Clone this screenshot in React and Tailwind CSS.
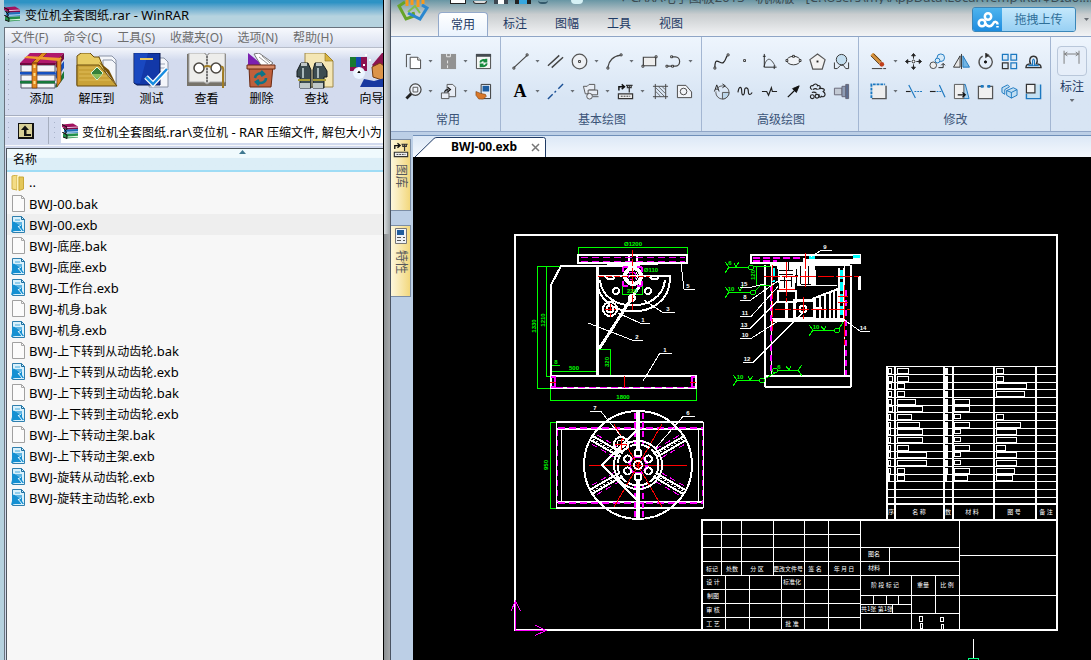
import React, { useState } from 'react'

const SANS = 'font-["Noto_Sans","Noto_Sans_CJK_SC",sans-serif]'

const MENUS = ['文件(F)', '命令(C)', '工具(S)', '收藏夹(O)', '选项(N)', '帮助(H)']

const FILES = [
  'BWJ-00.bak',
  'BWJ-00.exb',
  'BWJ-底座.bak',
  'BWJ-底座.exb',
  'BWJ-工作台.exb',
  'BWJ-机身.bak',
  'BWJ-机身.exb',
  'BWJ-上下转到从动齿轮.bak',
  'BWJ-上下转到从动齿轮.exb',
  'BWJ-上下转到主动齿轮.bak',
  'BWJ-上下转到主动齿轮.exb',
  'BWJ-上下转动主架.bak',
  'BWJ-上下转动主架.exb',
  'BWJ-旋转从动齿轮.exb',
  'BWJ-旋转主动齿轮.exb',
]

// Chinese runs are set one size smaller than the Latin ones
function Mixed({ text }) {
  return text.split(/([\u4e00-\u9fff]+)/).map((part, i) =>
    /[\u4e00-\u9fff]/.test(part) ? (
      <span key={i} className="text-xs">{part}</span>
    ) : (
      <span key={i} className="text-[13px]">{part}</span>
    )
  )
}

/* ---------- archive window icons ---------- */

function BooksIcon() {
  return (
    <svg viewBox="0 0 16 16" className="h-4 w-4 shrink-0">
      <path d="M0 1.500 11 .5l5 3V6L5 6.500 0 4z" fill="#a3125f" />
      <path d="m5 4 11-.5V6L5 6.500z" fill="#7c0c48" />
      <path d="M2 6.500h3L16 6v4L5 10.500 2 9z" fill="#1f6fb8" />
      <path d="M5 8.800 16 8.300v1L5 9.800z" fill="#d8ecff" />
      <path d="M1 11h4l11-.7v4.200l-11 1-4-1.500z" fill="#23904a" />
      <path d="m5 13.400 11-.7v1.200l-11 .7z" fill="#e0f8e0" />
      <path d="M0 1.500 5 4v2.500L1.500 5.500 4 8v2.500L.5 9.500 5 12v3.500L1 14" fill="none" stroke="#111" />
      <path d="m5 4.600 11-.6" stroke="#f0c0dc" />
    </svg>
  )
}

function FileIcon({ exb }) {
  return (
    <svg viewBox="0 0 15 17" className="h-[17px] w-[15px] shrink-0">
      <path d="M1.500.5h9l3 3v13h-12z" fill={exb ? '#d9f1fc' : '#fbfbfb'} stroke={exb ? '#2f7fae' : '#a0a0a0'} />
      <path d="M10.500.5v3h3" fill="none" stroke={exb ? '#1b6f9f' : '#a8a8a8'} />
      {exb && (
        <g>
          <path d="M4 3h5v2H4z" fill="#8fcdec" />
          <path d="M1 5.500 4 6l4 2 3 1v3l2 3H4l-4 1 1-4z" fill="#1590d2" />
          <path d="m4 6 3 0 4 0v3L8 9z" fill="#5db4e2" />
          <path d="m7 10 4 5M10 9l-3 2" stroke="#e6f6ff" />
        </g>
      )}
    </svg>
  )
}

const TOOLS = [
  {
    label: '添加',
    icon: (
      <g>
        <path d="M0 10 10 0h34l-9 10z" fill="#b0186c" />
        <path d="M35 10 44 0v6l-8 9z" fill="#72083f" />
        <path d="m35 20 9-12v7l-8 11z" fill="#1550c0" />
        <path d="m35 33 9-15v7l-8 10z" fill="#16783a" />
        <path d="M1 12h34v7H1zM1 22h34v6H1zM1 30h34v5H1z" fill="#f4f4f8" stroke="#556" />
        <path d="M0 10h35v2H0z" fill="#72083f" />
        <path d="M0 19h35v2.500H0z" fill="#1550c0" />
        <path d="M0 28h35v2.500H0z" fill="#16783a" />
        <path d="M12 10h5v25h-5zM12 10 22 0h5L17 10zM37 7l4-4v25l-4 6z" fill="#e48a20" stroke="#7a3a08" strokeWidth=".7" />
        <path d="m4 5 3-2 35 2-3 3z" fill="#ef9c30" />
        <path d="M14.500 12v20" stroke="#ffe08a" strokeDasharray="3 5" strokeWidth="2" />
      </g>
    ),
  },
  {
    label: '解压到',
    icon: (
      <g>
        <path d="M24 3h13l4 4v25H24z" fill="#f4f6fa" stroke="#8a93a5" />
        <path d="M28 7h9l4 4v20H28z" fill="#f4f6fa" stroke="#8a93a5" />
        <path d="M2 3 6 0h9l4 4h5l12 28H2z" fill="#e7cb62" stroke="#6a4c0c" />
        <path d="M2 12h22l18 21H2z" fill="#c9a238" stroke="#6a4c0c" />
        <path d="M4 15h22M4 19h24M4 23h28M4 27h32" stroke="#e0bd58" />
        <path d="m24 9 10 8 8 16z" fill="#765006" />
        <path d="m22 14 6 6-6 7-6-7z" fill="#35803a" stroke="#dff5da" />
        <path d="M17 21h10l-5 5z" fill="#8abf5c" />
      </g>
    ),
  },
  {
    label: '测试',
    icon: (
      <g>
        <path d="M22 5h12l4 4v25H19z" fill="#f3f5fa" stroke="#8a93a5" />
        <path d="M30 11h5M30 15h5M30 19h5" stroke="#9aa3b4" />
        <path d="M4 0h26v32H7l-3-2z" fill="#1238a8" stroke="#06164e" />
        <path d="M4 0h14l-8 30H4z" fill="#1f58d8" opacity=".5" />
        <path d="M10 6h13" stroke="#e8c860" strokeWidth="2" />
        <path d="m16 24 7 7 14-15" fill="none" stroke="#fff" strokeWidth="5" />
        <path d="m16 24 7 7 14-15" fill="none" stroke="#188ce0" strokeWidth="2.500" />
      </g>
    ),
  },
  {
    label: '查看',
    icon: (
      <g>
        <path d="M2 1v32h39V1l-5-1H24l-2 2-2-2H7z" fill="#77736a" />
        <path d="M4 0h15l3 3v28l-3-2H4zM40 0H25l-3 3v28l3-2h15z" fill="#ededeb" stroke="#aaa" />
        <path d="M22 3v27" stroke="#777" strokeDasharray="2 1" strokeWidth="2" />
        <circle cx="14" cy="15" r="5" fill="#fff" stroke="#4a4640" strokeWidth="1.500" />
        <circle cx="31" cy="15" r="5" fill="#fff" stroke="#4a4640" strokeWidth="1.500" />
        <path d="M19 14q3-2 7 0M36 14q3-1 2 6v15" fill="none" stroke="#a07c24" strokeWidth="2" />
      </g>
    ),
  },
  {
    label: '删除',
    icon: (
      <g>
        <path d="m8 0 16 13H8z" fill="#7c1fb0" />
        <path d="m14 1 5-1 14 10-5 4H22z" fill="#fff" stroke="#777" />
        <path d="m19 4 9 7M22 3l8 7" stroke="#999" />
        <path d="m9 14 24-1-2 21H10z" fill="#c0603c" stroke="#6a2a12" />
        <path d="M7 12h28v4H7z" fill="#d88c68" stroke="#6a2a12" />
        <path d="M15 25a5 5 0 0 1 7-4M26 25a5 5 0 0 1-8 4M21 18l3 3-3 2M19 32l-3-3 3-2" fill="none" stroke="#0e7488" strokeWidth="2.500" />
      </g>
    ),
  },
  {
    label: '查找',
    icon: (
      <g>
        <path d="M10 0h20l8 8v26H10z" fill="#f4e6b4" stroke="#a08a4a" />
        <path d="M30 0v8h8z" fill="#d8b440" stroke="#8c7020" strokeWidth=".6" />
        <path d="M6 10h7l3 7v18H5V24H2v-6zM20 10h7l5 8v6h-3v11H18V17z" fill="#3c4c50" stroke="#141a1c" />
        <path d="M5 30h10v5H5zM18 30h10v5H18zM6 10h6v3H6zM21 10h6v3h-6z" fill="#c0c8c8" />
        <path d="M3 27h12M18 27h13" stroke="#a89c38" strokeWidth="2" />
        <path d="M8 15v10M23 15v10" stroke="#a9b8ba" strokeWidth="2" />
      </g>
    ),
  },
  {
    label: '向导',
    icon: (
      <g>
        <path d="M0 4h17v14H0z" fill="#8c1050" />
        <path d="M0 4h6v10H0z" fill="#1a7a30" />
        <path d="M6 4h5v10H6z" fill="#1648b0" />
        <circle cx="9" cy="20" r="6" fill="#eaf4ff" />
        <path d="M22 12 32 0h12v18l-18-2z" fill="#8c1450" />
        <path d="m22 14 8-4 8 6-3 12-12-4z" fill="#dc9448" stroke="#733c10" />
        <path d="m10 34 4-8 10 2 14-4 4 10z" fill="#1838a0" />
        <path d="M15 2h2M19 7h2M13 12h2M6 20l3-4 3 4" stroke="#fff" strokeWidth="2" />
      </g>
    ),
  },
]

function Grip() {
  return <div className="my-1 w-[3px] shrink-0 self-stretch bg-[radial-gradient(circle,#a9b3ca_1px,transparent_1px)] bg-[length:3px_5px]" />
}

function ArchiveWindow() {
  const [selected, setSelected] = useState('BWJ-00.exb')
  return (
    <section className="flex w-96 shrink-0 flex-col border-r border-black bg-[#b6d2df] pl-1">
      <header className="flex h-[27px] items-center gap-[5px] bg-linear-to-b from-[#2e93c4] from-10% to-[#b6d3df] to-60%">
        <BooksIcon />
        <h1 className="whitespace-nowrap text-[#050505]">
          <Mixed text="变位机全套图纸.rar - WinRAR" />
        </h1>
      </header>

      <div className="flex flex-1 flex-col border-t border-l border-[#68727d] bg-[#d2daee]">
        <nav className="flex h-5 items-center gap-[15px] border-b border-[#b7bdca] bg-linear-to-b from-[#f7f9fd] to-[#d9e0f0] pl-[6px] text-xs text-[#6d6d6d]">
          {MENUS.map(m => (
            <button key={m} className="whitespace-nowrap leading-4">{m}</button>
          ))}
        </nav>

        <div className="flex h-[67px] overflow-hidden bg-linear-to-b from-[#f4f6fb] to-[#d3dbee] to-18% pl-[2px]">
          <Grip />
          <div className="flex pl-1">
            {TOOLS.map(t => (
              <button key={t.label} className="flex w-[55px] shrink-0 flex-col items-center gap-[2px] pt-[5px] text-xs leading-4 text-black">
                <svg viewBox="0 0 44 36" className="h-9 w-11">{t.icon}</svg>
                <span>{t.label}</span>
              </button>
            ))}
          </div>
        </div>

        <div className="flex h-[30px] items-stretch border-t border-[#a6aebf] shadow-[inset_0_1px_0_#f5f7fb] pl-[2px]">
          <Grip />
          <button aria-label="上级目录" className="flex w-[38px] items-center pl-2">
            <svg viewBox="0 0 16 16" className="h-4 w-4">
              <path d="M0 0h16v16H0z" fill="#111" />
              <path d="M1 1h13v13H1z" fill="#d7cf96" />
              <path d="M3 7 7 2.500 11 7H8.500v4H13v2H6V7z" fill="#111" />
            </svg>
          </button>
          <div className="my-px mr-1 w-px bg-[#a6aebf]" />
          <Grip />
          <div className="my-[2px] ml-[5px] flex flex-1 items-center gap-1 overflow-hidden bg-white pl-px">
            <BooksIcon />
            <span className="whitespace-nowrap text-black">
              <Mixed text="变位机全套图纸.rar\变位机 - RAR 压缩文件, 解包大小为" />
            </span>
          </div>
        </div>

        <div className="flex flex-1 flex-col border-t border-[#f5f7fb] pl-px pt-[2px]">
          <table className="block flex-1 border-t border-l border-[#4e565e] bg-[#f7f7f7]">
            <thead className="block">
              <tr className="block">
                <th className="relative flex h-[23px] items-center border-b-2 border-[#9fdcf5] bg-linear-to-b from-[#f0fafd] from-40% to-[#dceef7] to-45% pl-[6px] text-xs font-normal text-black">
                  名称
                  <span className="absolute top-px right-[137px] h-1 w-[7px] bg-[#3f7890] [clip-path:polygon(50%_0,100%_100%,0_100%)]" />
                </th>
              </tr>
            </thead>
            <tbody className="block">
              <tr className="block">
                <td className="flex h-[21px] items-center gap-1 pl-1 text-[13px]">
                  <svg viewBox="0 0 14 16" className="h-4 w-[14px]">
                    <path d="m1 1 5-1v15l-5-1z" fill="#f3dc86" stroke="#d0b044" />
                    <path d="m6 1 3-.5v15L6 15z" fill="#fdf2b8" />
                    <path d="M8 2h4.500v12L8 15.500z" fill="#e4c75a" stroke="#c9a838" />
                  </svg>
                  ..
                </td>
              </tr>
              {FILES.map(name => (
                <tr key={name} className="block" onClick={() => setSelected(name)}>
                  <td className={`flex h-[21px] items-center gap-[2px] pl-1 text-black ${selected === name ? 'bg-[#eeeeee]' : ''}`}>
                    <FileIcon exb={name.endsWith('.exb')} />
                    <span className="whitespace-nowrap pl-px leading-5"><Mixed text={name} /></span>
                  </td>
                </tr>
              ))}
            </tbody>
          </table>
        </div>
      </div>
    </section>
  )
}

/* ---------- ribbon ---------- */

const K = '#444'
const B = '#1c78c0'
const sq = (x, y) => <path key={`${x}-${y}`} d={`M${x - 1} ${y - 1}h2v2h-2z`} fill="#fff" stroke="#222" strokeWidth=".9" />

const GLYPHS = {
  copy: <g stroke={K} fill="#fff"><path d="M1.500 15V1.500H6" fill="none" /><path d="M5.500 4.500h8l3 3v9h-11z" /><path d="M13.500 4.500v3h3" /></g>,
  paste: <g fill="#929292"><path d="M1 1h16v16H1z" /><path d="M7 1v3h4V1M8 8v3M8 13v3" stroke="#eee" fill="none" /></g>,
  refresh: <g><path d="M1.500 1.500h15v15h-15z" fill="#f4f6f4" stroke="#444" /><path d="M1 1h16v3H1z" fill="#454b50" /><path d="M5.500 10a4 3.500 0 0 1 6-2M12.500 11a4 3.500 0 0 1-6 2.500M12 6v3H9M6 15v-3h3" fill="none" stroke="#168a3c" strokeWidth="2" /></g>,
  zoom: <g fill="none"><circle cx="11" cy="7" r="6" fill="#eef3fa" stroke={K} strokeWidth="1.300" /><path d="M8.500 4.500h5v5h-5z" stroke="#555" /><path d="m6.500 11.500-5 5" stroke="#222" strokeWidth="3" /></g>,
  block: <g fill="#e8edf5" stroke="#555"><path d="M7.500 1.500h6l3 3v10h-9z" /><path d="M1.500 10.500h8v6h-8z" /><path d="M5 10c0-2 1-3 4-3M8 4.500l3 2.500-3 2.500" fill="none" stroke="#111" strokeWidth="1.300" /></g>,
  brush: <g><path d="M6.500 1.500h10v15h-10z" fill="#e7eef7" stroke="#333" /><path d="M8 3h7v6H8z" fill="#1d5da0" /><path d="m1 9 5 2 5 1 1 2-3 3H4l-3-4z" fill="#d8782a" stroke="#7c3906" strokeWidth=".6" /></g>,
  line: <g stroke={K} strokeWidth="1.200"><path d="M2 15.500 16 2.500" />{sq(2, 16)}{sq(16, 2)}</g>,
  parallel: <path d="M1 13.500 13 2.500M5 15.500 17 4.500" stroke={K} strokeWidth="1.500" />,
  circle: <g fill="none" stroke="#555"><circle cx="9" cy="9" r="7.700" strokeWidth="1.300" fill="#eef1f5" />{sq(9, 9)}</g>,
  arc: <g fill="none" stroke={K}><path d="M2 15C3 8 8 3 15 2.500" strokeWidth="1.300" />{sq(2, 16)}{sq(16, 2)}</g>,
  rect: <g stroke={K}><path d="M2.500 4.500h13v9h-13z" fill="#eee" strokeWidth="1.300" />{sq(2, 14)}{sq(16, 4)}</g>,
  pline: <g fill="none" stroke={K}><path d="M2 14h6M7 4h4a4.500 5 0 0 1 0 10h-3" strokeWidth="1.300" />{sq(2, 14)}{sq(8, 14)}{sq(7, 4)}</g>,
  center: <path d="m1 17 5-5m2-2 1.500-1.500M12 6l5-5" stroke="#1a4f94" strokeWidth="1.500" />,
  shapes: <g fill="#e8edf5" stroke="#555"><path d="M1.500 3.500h4l2-2h6v6h-6v4h-4z" /><path d="M6.500 7.500h10v5h-10z" /><circle cx="8" cy="14" r="3" /><path d="M11.500 14.500h6" /></g>,
  lib: <g fill="none" stroke="#333"><path d="M2 8V4h5M5 1.500 8 4 5 6.500" stroke="#111" strokeWidth="1.500" /><path d="M9.500 2.500h7M13 2v8M11 2v3h4V2" strokeWidth="1.300" /><path d="M1.500 11.500h15v5h-15z" fill="#eee" strokeWidth="1.300" /><path d="M4 14h10" strokeDasharray="2 1" /></g>,
  hatch: <g fill="none" stroke="#444"><path d="M3.500 1v16M14.500 1v16M1 3.500h16M1 14.500h16" /><path d="m4 9 5 5M4 5l9 9M7 4l7 7M11 4l3 3" strokeWidth=".8" /></g>,
  region: <g fill="#f2f4f8" stroke="#444"><path d="M1.500 2.500h9l6 7v6h-15z" /><circle cx="8" cy="9" r="3.500" /></g>,
  spline: <g fill="none" stroke="#222" strokeWidth="1.300"><path d="M2 15c0-13 6-2 9-5s2-4 4-7" />{sq(2, 16)}{sq(16, 2)}</g>,
  point: <g>{sq(8, 8)}</g>,
  graph: <g fill="none" stroke="#222"><path d="M3.500 1v14h13M2 3.500h3M14 13v4" /><path d="M3 15C6 4 10 4 15 14" strokeWidth=".8" /></g>,
  ellipse: <g stroke="#333"><ellipse cx="9" cy="8" rx="7" ry="4.500" fill="#f1f4f8" />{sq(9, 3.5)}{sq(2, 8)}{sq(16, 8)}</g>,
  polygon: <g stroke="#555"><path d="m9 1 8 6-3 10H4L1 7z" fill="#f2f2f2" strokeWidth="1.300" /><path d="M8 8h2v2H8z" fill="#222" stroke="none" /></g>,
  view: <g stroke="#333" fill="none"><circle cx="9" cy="7" r="5.500" fill="#c3def0" /><path d="M1.500 10v6.500h3L8 13h3l2.500 3.500h3V10" /></g>,
  gearArc: <g stroke="#555" fill="none"><circle cx="10" cy="10" r="7" /><path d="M10 10h7a7 7 0 0 1-7 7z" fill="#bcd6ea" /><path d="m1.500 9 2.500-7 2.500 7M2.500 6.500h3" fill="#dfe9f5" stroke="#222" /><path d="m10 1 3 2-3 2" stroke="#222" /></g>,
  wave: <path d="M1 10c1-7 4-7 4-1 0 5 3 5 3-1 0-4 4-4 4 1s3 3 4 1" fill="none" stroke="#222" strokeWidth="1.200" />,
  breakLine: <path d="M1 9h5l2 4 3-8 1 4h5" fill="none" stroke="#222" strokeWidth="1.200" />,
  arrow: <g stroke="#111"><path d="M3 15 13 5" strokeWidth="1.300" /><path d="m15 3-3 7-4-4z" fill="#111" /></g>,
  chain: <g fill="none" stroke="#222" strokeWidth="1.200"><circle cx="3.500" cy="14.500" r="2" /><circle cx="8.500" cy="14" r="2" /><path d="M3 7c-3-2-1-5 1-4 2-3 5-2 5 0 2-1 4 1 2 3 4-1 7 1 4 3 4 3 1 7-2 5-1 2-3 1-2-2M4 7q3-2 5 0M3 10q3-1 5 1" /></g>,
  shaft: <g stroke="#667"><path d="M1.500 5.500h8v7h-8z" fill="#c3cad4" /><path d="M9.500 3.500h4v11h-4z" fill="#8e9cb4" /><path d="M13.500 1.500h3v15h-3z" fill="#5c6f92" /></g>,
  erase: <g><path d="m2 1 9 9" stroke="#d8923c" strokeWidth="4" /><path d="m1 3 9 9M4 1l8 8" fill="none" stroke="#4c3010" /><circle cx="12.500" cy="12" r="2.500" fill="#c0401c" /><path d="M2 16.500h11M14 16.500h3" stroke="#333" /></g>,
  move: <g stroke="#222" fill="#222"><path d="M9 2v4M9 12v4M2 9h4M12 9h4" /><circle cx="9" cy="9" r="1.500" fill="#fff" /><path d="m9 .5 2 2.500H7zM9 17.500l2-2.500H7zM.5 9 3 7v4zM17.500 9 15 7v4z" /></g>,
  rotCopy: <g fill="none" stroke="#444"><circle cx="12.500" cy="5" r="4" stroke={B} fill="#d7eaf8" /><circle cx="9" cy="8" r="2.500" stroke={B} fill="#d7eaf8" /><circle cx="4.500" cy="13" r="3.500" fill="#eee" /><path d="M10 15.500h5v-4M13 13l2-2 2 2" stroke="#222" /></g>,
  mirror: <g><path d="M7.500 3v12h-7z" fill="#e8e8e8" stroke="#333" /><path d="M10.500 3v12h7z" fill="#74b5e3" stroke={B} /><path d="M9 1v16" stroke="#333" /></g>,
  rotate: <g fill="none" stroke="#555"><path d="M10 2.500a7 7 0 1 1-4 .7" strokeWidth="1.500" /><path d="m9 0 4 2.500L9 5z" fill="#222" /><circle cx="9" cy="9.500" r="1.200" fill="#111" stroke="#111" /></g>,
  array: <g fill="#dceaf6" strokeWidth="1.300"><path d="M1.500 1.500h6v6h-6zM10.500 1.500h6v6h-6zM10.500 10.500h6v6h-6z" stroke={B} /><path d="M1.500 10.500h6v6h-6z" stroke="#333" /></g>,
  offset: <g fill="none"><path d="M1 15.500h16c0-3-2-4-5-4 2-3 1-8-3-8s-5 5-3 8c-3 0-5 1-5 4z" stroke="#333" strokeWidth="1.500" /><path d="M4 13.500h10q-1-1-4-1V8q-1-3-2 0v4.500q-3 0-4 1z" stroke={B} strokeWidth="1.200" /></g>,
  trim: <g fill="none" strokeWidth="1.300"><path d="M2 2h14v14H2z" fill="#eee" /><path d="M1.500 16V1.500H16" stroke={B} strokeDasharray="3 1" strokeWidth="2" /><path d="M2 16.500h15V3" stroke="#555" strokeWidth="1.500" /></g>,
  cut: <g fill="none" strokeWidth="1.200"><path d="M1 9h5" stroke="#222" /><path d="M10 9h8" stroke={B} strokeDasharray="2 1" /><path d="m4 2 7 14" stroke={B} /></g>,
  extend: <g fill="none" strokeWidth="1.200"><path d="M1 9h6" stroke="#222" /><path d="M8 9h6" stroke={B} strokeDasharray="2 1" /><path d="m11 2 6 13" stroke={B} /></g>,
  stretch: <g><path d="M11 1.500h2l4 15h-6z" fill="#a9d1ee" stroke={B} /><path d="M1.500 1.500h10v15h-10z" fill="#f0f0f0" stroke="#555" /><path d="M5 12.500h7M10 10l3 2.500-3 2.500" fill="none" stroke="#111" strokeWidth="1.300" /></g>,
  split: <g><path d="M1.500 3.500h15v13h-15z" fill="#f0f0f0" stroke="#555" strokeWidth="1.300" /><path d="M7 2h4v3H7z" fill="#dfe9f5" /><path d="M4 2h3v3H4zM11 2h3v3h-3z" fill={B} /></g>,
  cube: <g fill="#c0def2" stroke={B}><path d="m1 5 6-3 2 2-5 3v5l-3-2zM6 8l7-3 4 2v6l-6 3-5-3z" /><path d="m6 8 5 2 6-3M11 10v6" fill="none" /></g>,
  scale: <g><path d="M1.500 1.500h15v15h-15z" fill="#c3e0f2" stroke="none" /><path d="M16.500 1.500v15h-15v-5" fill="none" stroke={B} strokeWidth="1.500" /><path d="M1.500 1.500h9v9h-9z" fill="#f2f2f2" stroke="#333" strokeWidth="1.300" /></g>,
}

// a "v" after a name gives the button a drop-down arrow
const GROUPS = [
  {
    title: '常用',
    rows: [['copy', 'v', 'paste', 'v', 'refresh'], ['zoom', 'v', 'block', 'v', 'brush']],
  },
  {
    title: '基本绘图',
    rows: [
      ['line', 'v', 'parallel', 'circle', 'v', 'arc', 'v', 'rect', 'pline', 'v'],
      ['A', 'v', 'center', 'v', 'shapes', 'v', 'lib', 'v', 'hatch', 'region'],
    ],
  },
  {
    title: '高级绘图',
    rows: [
      ['spline', 'point', 'graph', 'ellipse', 'polygon', 'view'],
      ['gearArc', 'wave', 'breakLine', 'arrow', 'chain', 'shaft'],
    ],
  },
  {
    title: '修改',
    rows: [
      ['erase', 'v', 'move', 'rotCopy', 'mirror', 'rotate', 'array', 'offset'],
      ['trim', 'v', 'cut', 'extend', 'stretch', 'split', 'cube', 'scale'],
    ],
  },
]

function Caret() {
  return <span className="block h-[3px] w-[5px] bg-[#6a6f76] [clip-path:polygon(0_0,100%_0,50%_100%)]" />
}

function RibbonCell({ name }) {
  if (name === 'v') {
    return <button aria-label="更多" className="flex h-6 w-[11px] items-center justify-center"><Caret /></button>
  }
  return (
    <button aria-label={name} className="flex h-6 w-6 items-center justify-center">
      {name === 'A' ? (
        <span className="font-['Liberation_Serif',serif] text-lg leading-5 font-bold text-black">A</span>
      ) : (
        <svg viewBox="0 0 18 18" className="h-[17px] w-[17px]">{GLYPHS[name]}</svg>
      )}
    </button>
  )
}

function Ribbon() {
  return (
    <div className="flex h-[96px] shrink-0 overflow-hidden border-y border-[#8fa5c6] bg-linear-to-b from-[#eef5fd] to-[#d8e5f4] to-65%">
      {GROUPS.map(g => (
        <div key={g.title} className="flex shrink-0 flex-col border-r border-[#a3b6d2] pt-3 pr-[5px] pl-[7px] first:pl-[10px]">
          {g.rows.map((row, i) => (
            <div key={i} className="flex h-[30px] shrink-0">
              {row.map((name, j) => <RibbonCell key={j} name={name} />)}
            </div>
          ))}
          <div className="text-center text-xs leading-[22px] text-[#3b5478]">{g.title}</div>
        </div>
      ))}
      <button className="flex shrink-0 flex-col items-center border-r border-[#a3b6d2] px-[6px] pt-[9px] text-xs text-[#1f3a64]">
        <svg viewBox="0 0 30 30" className="h-[30px] w-[30px] rounded border border-[#b9c7da] bg-[#e6eef9]">
          <path d="M6.500 4v14M22.500 4v14M7 7.500h15M10 5.500 7 7.500l3 2M19 5.500l3 2-3 2" fill="none" stroke="#777" />
        </svg>
        <span className="pt-[3px] leading-4">标注</span>
        <span className="pt-1"><Caret /></span>
      </button>
    </div>
  )
}

/* ---------- drawing sheet ---------- */

const G = '#00ff00'
const M = '#ff00ff'
const R = '#ff0000'

// [no., name, qty, material, note] outline widths for each parts-list row
const PARTS = [
  [3, 11, 2, 0, 7], [4, 11, 2, 0, 7], [3, 7, 2, 0, 30], [3, 7, 2, 0, 28], [3, 18, 2, 15, 0],
  [4, 25, 2, 15, 0], [2, 14, 2, 6, 7], [2, 22, 2, 15, 24], [2, 25, 2, 6, 20], [2, 25, 2, 6, 20],
  [2, 11, 2, 15, 9], [2, 29, 2, 6, 20], [2, 29, 2, 6, 20], [2, 7, 2, 15, 18], [1, 7, 1, 13, 16],
]
const PART_X = [888, 897, 945, 954, 996]

const BLOCK_TEXT = [
  [712, 571, '标记'], [732, 571, '处数'], [757, 571, '分 区'], [788, 571, '更改文件号'], [815, 571, '签 名'], [844, 571, '年 月 日'],
  [713, 584, '设 计'], [792, 584, '标准化'], [713, 598, '制图'], [713, 612, '审 核'], [713, 626, '工 艺'], [792, 626, '批 准'],
  [874, 556, '图名'], [874, 570, '材料'], [885, 587, '阶 段 标 记'], [923, 587, '重量'], [947, 587, '比 例'], [877, 611, '共1张 第1张'],
  [891, 514, '序'], [919, 514, '名 称'], [948, 514, '数'], [972, 514, '材 料'], [1014, 514, '图 号'], [1046, 514, '备 注'],
]

const SPOKES = [60, 120, 240, 300]

function FrontView() {
  return (
    <g fill="none">
      <path d="M578.500 256v-8.500h109v8M560 266.500h-22.500v122h13M546.500 266v110.500h5M551 371.500h47M551 365.500h9M599 349.500h11.500v27M550.500 388v12.500h146v-12M622.500 283v11.500h20v-11" stroke={G} />
      <path d="M578 255h109v8H578zM628.500 255v8M636.500 255v8" stroke="#fff" strokeWidth="2" />
      <path d="M607 264.500h51" stroke="#fff" />
      <path d="M581 257.500h104M581 261.500h104" stroke={M} strokeDasharray="7 4" />
      <path d="M640 266h-79l-10 19v91" stroke="#fff" strokeWidth="2" />
      <path d="M597.500 266v110" stroke="#fff" strokeWidth="3" />
      <path d="M551 376h145v12H551z" stroke="#fff" strokeWidth="2" />
      <path d="M556 387.500h136" stroke={M} strokeDasharray="7 4" />
      <path d="M551 377h4v10h-4M695 377h-3v10h3" stroke={M} strokeWidth="2" />
      <path d="M624.500 376v12M550 382.500h6M690 382.500h6" stroke={R} />
      <path d="M597 276h73v4c-2 42-72 42-73 0zM600 280c3 34 62 34 65 0" stroke="#fff" strokeWidth="2" />
      <path d="m642 282-43 67" stroke="#fff" strokeWidth="3" />
      <g stroke="#fff" strokeWidth="2">
        <circle cx="616" cy="291" r="3" /><circle cx="648" cy="291" r="3" /><circle cx="632" cy="298" r="3" />
        <path d="M606 277c1 3 8 3 8 0M650 277c1 3 8 3 8 0" />
        <circle cx="610" cy="309" r="7" /><circle cx="610" cy="309" r="3.500" />
      </g>
      <circle cx="633" cy="276" r="8" stroke="#fff" strokeWidth="4" />
      <path d="M622.500 266.500h19v19h-19z" stroke={M} strokeWidth="2" strokeDasharray="5 9 5 0" />
      <circle cx="632" cy="276" r="4" stroke={M} strokeDasharray="3 2" />
      <circle cx="632" cy="276" r="5.500" stroke="#fff" strokeDasharray="4 2" />
      <path d="M598 276.500h52" stroke={R} strokeDasharray="6 2" />
      <path d="M632.500 250v60M605 309.500h11M610.500 304v13" stroke={R} strokeDasharray="7 2" />
      <path d="m588 323 44 17h11M618 313l22 10h10M644 300l18 12h13M681 264l3 25h11M643 381l17-28h12" stroke="#fff" />
    </g>
  )
}

function TopView() {
  return (
    <g fill="none">
      <path d="M556 422.500h-6v86h6" stroke={G} />
      <path d="M556 422h147M556 429h147M556 502h147M556 508h147" stroke="#fff" strokeWidth="2" />
      <path d="M556.500 422v86M561.500 430v71M698.500 430v71M703.500 422v86" stroke="#fff" />
      <path d="M558 428h145M558 503h145" stroke={M} strokeWidth="2" strokeDasharray="7 4" />
      <path d="M557.500 430v72M702.500 430v72" stroke={M} strokeDasharray="6 4" />
      <circle cx="638" cy="465" r="54" stroke="#fff" strokeWidth="2" />
      <path d="M638 411v40M638 480v40" stroke="#fff" strokeWidth="4" />
      <path d="M634.500 413v34M642.500 413v34M634.500 484v34M642.500 484v34" stroke={M} strokeWidth="2" strokeDasharray="6 3" />
      {SPOKES.map(a => (
        <g key={a} transform={`rotate(${a} 638 465)`}>
          <path d="M636 412v34M640.500 412v34" stroke="#fff" strokeWidth="2" />
          <path d="M638 413v32" stroke="#fff" strokeDasharray="2 2" />
          <path d="M633 415v28M643.500 415v28" stroke={M} strokeDasharray="6 4" />
        </g>
      ))}
      <path d="M589 465.500h98M614 424l48 83M662 424l-48 83" stroke={R} />
      <circle cx="638" cy="465" r="24" stroke="#fff" strokeWidth="2" />
      <circle cx="638" cy="465" r="20.500" stroke="#fff" strokeWidth="2" strokeDasharray="9 2" />
      <circle cx="638" cy="465" r="8.500" stroke={M} strokeWidth="2.500" strokeDasharray="7 2" />
      <circle cx="638" cy="465" r="4" stroke="#fff" strokeWidth="2" />
      <path d="M635 465.500h7M638.500 462v7" stroke={R} />
      {[0, 60, 120, 180, 240, 300].map(a => (
        <circle key={a} cx="638" cy="453" r="3.500" stroke="#fff" strokeWidth="2" transform={`rotate(${a} 638 465)`} />
      ))}
      <path d="m637 430-35 35 35 35" stroke="#fff" strokeWidth="1.500" />
      <circle cx="621" cy="444" r="7" stroke="#fff" strokeWidth="2" />
      <circle cx="621" cy="444" r="4" stroke="#fff" />
      <path d="M615 444.500h12M621.500 439v11" stroke={R} />
      <path d="M590 411.500h11l21 26M695 416.500h-12l-27 31" stroke="#fff" />
    </g>
  )
}

function SideView() {
  return (
    <g fill="none">
      <path d="M751 255h109v8H751z" stroke="#fff" strokeWidth="2" />
      <path d="M803 258h56v6h-56z" fill="#fff" />
      <path d="M805 258.500h48" stroke="#000" />
      <path d="M753 258h50M753 261h24" stroke={M} strokeWidth="2" strokeDasharray="7 3" />
      <path d="M809 256h6v3h-6zM853 255h7v3h-7z" fill="#00ffff" />
      <path d="M765 265v122M851 265v122M770 265h80M765 376h86M765 387h86" stroke="#fff" strokeWidth="2" />
      <path d="M771.500 266v110M844.500 266v110" stroke="#fff" />
      <path d="M771 285v90M846 290v85" stroke={M} strokeWidth="2" strokeDasharray="6 4" />
      <path d="M772 320h73" stroke="#fff" strokeWidth="4" />
      <path d="M777 262h20l-2 28h-16zM797 264h18v22h-18z" fill="#fff" />
      <path d="M788 262v8M779 270h14M779 274h14M780 280h12M784 276v12M791 277v10M800 266v18M808 266v18M798 275h-3M801 284h10" stroke="#000" />
      <path d="M815 285h22M815 270v15" stroke="#fff" />
      <path d="M778 291h18v11h-18z" fill="#000" stroke="#fff" strokeWidth="2" />
      <path d="M786 302v17" stroke="#fff" strokeWidth="3" />
      <path d="M794 300h20v18h-20zM814 308h8" stroke="#fff" strokeWidth="3" />
      <circle cx="803" cy="309" r="3.500" stroke="#fff" strokeWidth="2" />
      <path d="m812 299 26-10v30M820 296v23M825 294v25M830 292v27M834 290v29" stroke="#fff" strokeWidth="2" />
      <path d="M839 268v50M844 268v50" stroke="#fff" strokeWidth="2" />
      <path d="M841.500 270v46M773 268v14" stroke="#00ffff" strokeWidth="3" strokeDasharray="9 3" />
      <path d="M859 276v14" stroke="#fff" strokeWidth="3" />
      <path d="M764 276.500h95M775 309.500h75M779 289.500h17M805.500 253v35M803.500 297v22M786.500 262v40M772.500 265v66M844.500 285v60M838 296.500h10M838 302.500h10" stroke={R} strokeDasharray="16 2" />
      <g stroke={G}>
        <circle cx="751" cy="267.500" r="2.500" /><circle cx="753" cy="292.500" r="2.500" />
        <circle cx="837" cy="330.500" r="2.500" /><circle cx="775" cy="370.500" r="2.500" /><circle cx="762" cy="380.500" r="2.500" />
        <path d="M749 267.500h-20M725 262l4 5-4 6M734 263l2 4 3-5M753 266.500h18M756.500 267v18" />
        <path d="M751 292.500h-22M725 287l4 5-4 6M738 287l2 4 3-5M755 291l6-6h10" />
        <path d="M835 330.500h-22M809 325l4 5-4 6M821 326l3 4 2-4M839 329l4-7" />
        <path d="M777 370.500h21M802 365l-4 5 4 6M786 366l3 4 2-4M775 373l-9 5" />
        <path d="M760 380.500h-23M733 375l4 5-4 6M748 376l2 4 3-4" />
      </g>
      <path d="M740 287.500h10l16-4M740 300.500h10l30-21M740 316.500h11l27-30M740 328.500h10l28-28M740 338.500h11l28-18M743 362.500h10l50-50M832 250.500h-11l-10 6M843 319l17 12h10" stroke="#fff" />
    </g>
  )
}

function TitleBlock() {
  return (
    <g fill="none" stroke="#fff">
      <path d="M702 630V520h355M887 520V366" strokeWidth="2" />
      <path d="M887 366.500h170M887 374.500h170M887 382.500h170M887 389.500h170M887 397.500h170M887 405.500h170M887 412.500h170M887 420.500h170M887 428.500h170M887 435.500h170M887 443.500h170M887 451.500h170M887 458.500h170M887 466.500h170M887 474.500h170M887 481.500h170M887 489.500h170M887 497.500h170" />
      <path d="M887 504h170" strokeWidth="2" />
      <path d="M895 366v154M944 366v154M953 366v154M994 366v154M1036 366v154" strokeWidth="2" />
      {PARTS.map((row, r) =>
        row.map((w, c) => w > 0 && (
          <rect
            key={`${r}-${c}`}
            x={PART_X[c] + 0.5}
            y={368.5 + Math.round(r * 7.67)}
            width={w}
            height={c === 3 && w === 6 ? 4 : 5}
            fill={c === 2 ? '#fff' : 'none'}
          />
        ))
      )}
      <path d="M702 534.500h158M702 547.500h257M702 561.500h257M702 575.500h257M702 589.500h158M702 603.500h158M702 617.500h158" />
      <path d="M721.500 520v55M741.500 520v55M773.500 520v55M804.500 520v110M828.500 520v110M860.500 520v110M725.500 575v55M749.500 575v55M781.500 575v55" />
      <path d="M889.500 547v28M911.500 575v55M935.500 575v38M959.500 520v110M860 595.500h99M860 604.500h51M860 613.500h99M873.500 595v9M886.500 595v9M898.500 595v9M892.500 604v9M959 555.500h98M959 595.500h98" />
      <path d="M919.500 616.500v5h3v-5zM920.500 623.500h2v5h-2zM940.500 617.500v4h3v-4zM941.500 624.500h2v5h-2z" />
    </g>
  )
}

function Label({ x, y, turn, color, children }) {
  return (
    <text x={x} y={y} fill={color || '#fff'} textAnchor="middle" transform={turn ? `rotate(-90 ${x} ${y})` : undefined}>
      {children}
    </text>
  )
}

function Drawing() {
  return (
    <svg viewBox="413 157 678 503" className="h-[503px] w-[678px] shrink-0" shapeRendering="crispEdges" aria-label="BWJ-00">
      <path d="M515 235h542v395H515z" fill="none" stroke="#fff" strokeWidth="2" />
      <FrontView />
      <TopView />
      <SideView />
      <TitleBlock />

      <g className='font-["Liberation_Sans",sans-serif] text-[6px] font-bold'>
        <Label x={633} y={246} color={G}>Ø1200</Label>
        <Label x={623} y={399} color={G}>1800</Label>
        <Label x={574} y={370} color={G}>500</Label>
        <Label x={556} y={364} color={G}>8</Label>
        <Label x={632} y={293} color={G}>220</Label>
        <Label x={651} y={272} color={G}>Ø110</Label>
        <Label x={536} y={326} turn color={G}>1330</Label>
        <Label x={545} y={320} turn color={G}>1210</Label>
        <Label x={609} y={362} turn color={G}>320</Label>
        <Label x={548} y={465} turn color={G}>950</Label>
        <Label x={755} y={275} turn color={G}>120</Label>
        <Label x={730} y={265} color={G}>6</Label>
        <Label x={731} y={291} color={G}>10</Label>
        <Label x={816} y={329} color={G}>10</Label>
        <Label x={740} y={379} color={G}>10</Label>
        <Label x={779} y={369} color={G}>6</Label>
        <Label x={643} y={322}>1</Label>
        <Label x={637} y={339}>2</Label>
        <Label x={668} y={311}>3</Label>
        <Label x={688} y={288}>5</Label>
        <Label x={665} y={352}>1</Label>
        <Label x={595} y={410}>7</Label>
        <Label x={688} y={415}>6</Label>
        <Label x={825} y={249}>9</Label>
        <Label x={744} y={286}>15</Label>
        <Label x={745} y={299}>8</Label>
        <Label x={745} y={315}>11</Label>
        <Label x={744} y={327}>13</Label>
        <Label x={745} y={337}>10</Label>
        <Label x={747} y={361}>12</Label>
        <Label x={863} y={330}>14</Label>
      </g>
      <g className='font-["Noto_Sans_CJK_SC",sans-serif] text-[6px]'>
        {BLOCK_TEXT.map(([x, y, t]) => <Label key={t} x={x} y={y}>{t}</Label>)}
      </g>

      <path d="M515.500 630v-29M511 611l4.500-10 5 10M515 630.500h31M535 625l11 5.500-11 5" fill="none" stroke={M} />
      <path d="M973.500 639v19" stroke="#fff" />
      <path d="M968 658.500h10v3h-10z" fill="none" stroke="#00ff80" />
    </svg>
  )
}

/* ---------- CAD window ---------- */

function CadHeader() {
  const tabs = ['标注', '图幅', '工具', '视图']
  return (
    <header className="relative flex h-9 shrink-0 overflow-hidden bg-linear-to-b from-[#6896a4] via-[#c9cdcf] via-40% to-[#f3f4f6] pl-[5px]">
      <svg viewBox="0 0 34 24" className="h-6 w-[34px] shrink-0">
        <path d="m9 2-6 4 7 13 8-3-1-4" fill="none" stroke="#66a428" strokeWidth="3" />
        <path d="m12 13 12 6 7-11-5-3" fill="none" stroke="#2b87cf" strokeWidth="3" />
        <path d="m12 12 7-6 5 7" fill="none" stroke="#7fbf4c" strokeWidth="2" />
        <path d="M11 0v6M16 0v5M22 0v7M27 0v4" fill="none" stroke="#f79a1c" strokeWidth="3" />
      </svg>
      <div className="flex min-w-0 flex-1 flex-col justify-between pl-2">
        <div className="flex h-1 items-end overflow-hidden pl-3 text-[#30373c]">
          <div className="flex w-[170px] shrink-0 items-end gap-[7px]">
            <i className="h-1 w-4 border border-t-0 border-[#222] bg-white" />
            <i className="h-[3px] w-[14px] rounded-b border border-t-0 border-[#333] bg-[#ddd]" />
            <i className="h-1 w-[14px] border-x-4 border-[#3d4650] bg-white" />
            <i className="h-1 w-4 border-x-4 border-[#222] bg-[#36a7e0]" />
            <i className="h-1 w-[10px] rounded-b border-b-2 border-[#33596b]" />
            <i className="ml-4 h-1 w-3 rounded-b bg-[#d6f1f5]" />
          </div>
          <span className="whitespace-nowrap text-[13px] leading-[14px] opacity-80">
            ▾ CAXA电子图板2013 - 机械版 - [C:\Users\my\AppData\Local\Temp\Rar$DIa0....
          </span>
        </div>
        <nav className="flex h-6 text-xs leading-6 text-[#1f3a64]">
          <button className="mr-px w-[50px] rounded-t border border-b-0 border-[#93a9cb] bg-linear-to-b from-white to-[#eaf3fd]">常用</button>
          {tabs.map(t => <button key={t} className="w-[52px]">{t}</button>)}
        </nav>
      </div>
      <div className="absolute top-[7px] right-0 flex items-center">
        <button className="flex h-[25px] overflow-hidden rounded-[3px] border border-[#3a86b8] text-xs text-[#2f6f98]">
          <span className="flex w-[29px] items-center justify-center bg-linear-to-b from-[#4db4ee] to-[#1d8cdf]">
            <svg viewBox="0 0 22 16" className="h-4 w-[22px]" fill="none" stroke="#fff" strokeWidth="2.500">
              <circle cx="11" cy="4.500" r="3.200" />
              <circle cx="5" cy="11" r="3.300" />
              <path d="M8.500 11c0 3 5 4.500 7 1.500 2-4 5-3 5 0M20.500 14v1.500" />
            </svg>
          </span>
          <span className="w-[73px] bg-linear-to-b from-[#c4e8fb] to-[#98d0f4] leading-[23px]">拖拽上传</span>
        </button>
        <span className="flex w-[15px] justify-end pr-[2px]"><Caret /></span>
      </div>
    </header>
  )
}

function DockTab({ icon, label }) {
  return (
    <button className="flex h-[72px] w-5 flex-col items-center gap-[6px] border border-l-0 border-[#7c8ea6] bg-linear-to-r from-[#fdf7dc] to-[#f3d87c] pt-[2px] text-xs leading-4 text-[#55585c]">
      {icon}
      <span className="[writing-mode:vertical-rl] [text-orientation:sideways]">{label}</span>
    </button>
  )
}

function CadWindow() {
  return (
    <section className="flex min-w-0 flex-1 flex-col border-l border-[#4a5463] bg-[#bccfe6]">
      <CadHeader />
      <Ribbon />
      <div className="flex min-h-0 flex-1 pt-[3px]">
        <aside className="flex w-[22px] shrink-0 flex-col gap-[14px] pt-1">
          <DockTab label="图库" icon={<svg viewBox="0 0 18 18" className="h-4 w-4">{GLYPHS.lib}</svg>} />
          <DockTab
            label="特性"
            icon={
              <svg viewBox="0 0 16 16" className="h-4 w-4">
                <path d="M2.500.5h11v15h-11z" fill="#eef2f6" stroke="#777" />
                <path d="M4 2h7v5H4z" fill="#1e5c9c" />
                <path d="M4 9.500h4M4 12.500h4M10 9.500h2M10 12.500h2" stroke="#555" />
              </svg>
            }
          />
        </aside>
        <div className="flex min-w-0 flex-1 flex-col border-t border-[#6f8fb8]">
          <div className="flex h-[21px] shrink-0 items-end bg-linear-to-b from-[#dce8f6] to-[#f4f8fd]">
            <div className="relative flex h-5 w-[133px] items-center justify-end gap-3 pr-[5px]">
              <svg viewBox="0 0 133 20" preserveAspectRatio="none" className="absolute inset-0 h-full w-full">
                <path d="M2 20 21 1.500q1-1 3-1h106.500q2 0 2 2V20" fill="#fff" stroke="#1f3a64" />
              </svg>
              <span className="relative text-xs leading-5 font-bold text-black">BWJ-00.exb</span>
              <button aria-label="关闭" className="relative flex h-3 w-3 items-center justify-center">
                <svg viewBox="0 0 9 9" className="h-[9px] w-[9px]"><path d="m1 1 7 7M8 1 1 8" stroke="#777" strokeWidth="1.500" /></svg>
              </button>
            </div>
          </div>
          <main className="flex flex-1 overflow-hidden bg-black">
            <Drawing />
          </main>
        </div>
      </div>
    </section>
  )
}

export default function App() {
  return (
    <div className={`flex min-h-screen overflow-hidden ${SANS}`}>
      <ArchiveWindow />
      <div className="flex w-[6px] shrink-0 flex-col">
        <div className="h-[234px] bg-linear-to-r from-[#d9dde0] to-[#9da3a6]" />
        <div className="flex-1 bg-linear-to-r from-[#8b8f92] to-[#a5a8aa]" />
      </div>
      <CadWindow />
    </div>
  )
}
